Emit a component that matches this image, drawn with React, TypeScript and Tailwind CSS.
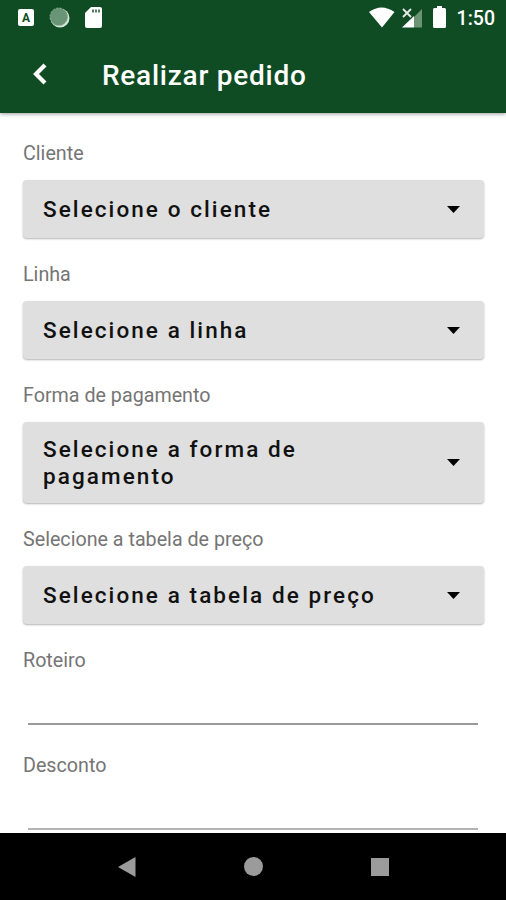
const SELECTS = [
  { label: "Cliente", value: "Selecione o cliente", height: "h-[58px]" },
  { label: "Linha", value: "Selecione a linha", height: "h-[58px]" },
  { label: "Forma de pagamento", value: "Selecione a forma de pagamento", height: "h-[81px]" },
  { label: "Selecione a tabela de preço", value: "Selecione a tabela de preço", height: "h-[58px]" },
];

const INPUTS = [
  { label: "Roteiro", border: "border-[#999]" },
  { label: "Desconto", border: "border-[#b3b3b3]" },
];

function StatusBar() {
  return (
    <div className="flex h-[35px] items-center justify-between pl-[18px] pr-[11px] text-white">
      <div className="flex items-center">
        <span className="flex h-[17px] w-4 items-center justify-center rounded-[2px] bg-white text-[12px] leading-none font-bold text-[#104c23]">
          A
        </span>
        <svg className="ml-[15px]" width="21" height="21" viewBox="0 0 21 21">
          <circle cx="11" cy="11" r="9.5" fill="#d5e5d7" />
          <circle cx="9.8" cy="9.8" r="8.8" fill="#699576" stroke="#8eb297" strokeWidth="1" strokeDasharray="2 1.5" />
        </svg>
        <svg className="ml-[15px]" width="17" height="21" viewBox="0 0 17 21">
          <path d="M6 0h9q2 0 2 2v17q0 2-2 2H2q-2 0-2-2V6z" fill="#fff" />
          <path d="M7 2.500h2v3H7zM10 2.500h2v3h-2zM13 2.500h2v3h-2z" fill="#557c61" />
        </svg>
      </div>
      <div className="flex items-center">
        <svg width="26" height="21" viewBox="0 0 26 21">
          <path d="M0 5Q12.5-4 25.5 5L13 20.5z" fill="#fff" />
        </svg>
        <svg className="ml-[7px]" width="20" height="21" viewBox="0 0 20 21">
          <path d="M20 2v18.500H12V10z" fill="#6b9474" />
          <path d="M12 9v11.500H0z" fill="#fff" />
          <path d="M1 2l8 8M9 2l-8 8" stroke="#e6eee8" strokeWidth="1.800" />
        </svg>
        <svg className="mr-px mb-0.5 ml-[11px]" width="13" height="22" viewBox="0 0 13 22">
          <path d="M4 0h5v2h2.500q1.500 0 1.500 1.500v17q0 1.500-1.500 1.500h-10Q0 22 0 20.500v-17Q0 2 1.500 2H4z" fill="#fff" />
        </svg>
        <span className="ml-2.5 pt-[3px] text-[19.500px] leading-6 font-medium">1:50</span>
      </div>
    </div>
  );
}

function Label({ text }: { text: string }) {
  return <div className="h-6 pt-px text-[19.700px] leading-6 text-[#757575]">{text}</div>;
}

function NavBar() {
  return (
    <nav className="flex h-[67px] shrink-0 items-center bg-black pl-[118px]">
      <svg width="18" height="20" viewBox="0 0 18 20">
        <path d="M17.500 0v20L0 10z" fill="#9b9b9b" />
      </svg>
      <span className="ml-[108px] size-[19px] rounded-full bg-[#9b9b9b]" />
      <span className="ml-[108px] size-[18px] bg-[#9b9b9b]" />
    </nav>
  );
}

export default function App() {
  return (
    <div className="flex h-[900px] w-[506px] flex-col overflow-hidden bg-white font-['Roboto',sans-serif]">
      <header className="z-10 h-[113px] shrink-0 bg-[#104c23] shadow-[0_1px_4px_rgba(0,0,0,0.4)]">
        <StatusBar />
        <div className="flex h-[78px] items-center pl-[33px]">
          <svg width="14" height="22" viewBox="0 0 14 22">
            <path d="M12 2L3 11l9 9" fill="none" stroke="#fff" strokeWidth="4.200" />
          </svg>
          <h1 className="ml-[55px] pt-1 text-[28px] leading-8 font-medium tracking-[0.750px] text-white">
            Realizar pedido
          </h1>
        </div>
      </header>

      <main className="min-h-0 flex-1 overflow-hidden px-[23px] pt-7">
        {SELECTS.map((s) => (
          <div key={s.label} className="mb-6">
            <Label text={s.label} />
            <button
              className={`mt-[15px] flex w-[461px] items-center justify-between rounded-[4px] bg-[#dfdfdf] pr-6 pl-5 text-left shadow-[0_1px_2px_rgba(0,0,0,0.3)] ${s.height}`}
            >
              <span className="w-[345px] text-[22.500px] leading-[27px] font-medium tracking-[2.080px] text-[#111]">
                {s.value}
              </span>
              <svg width="13" height="7" viewBox="0 0 13 7">
                <path d="M0 0h13L6.500 7z" fill="#000" />
              </svg>
            </button>
          </div>
        ))}
        {INPUTS.map((input) => (
          <div key={input.label} className="mb-7">
            <Label text={input.label} />
            <div className={`mx-[5px] h-[53px] border-b-2 ${input.border}`} />
          </div>
        ))}
      </main>

      <NavBar />
    </div>
  );
}
